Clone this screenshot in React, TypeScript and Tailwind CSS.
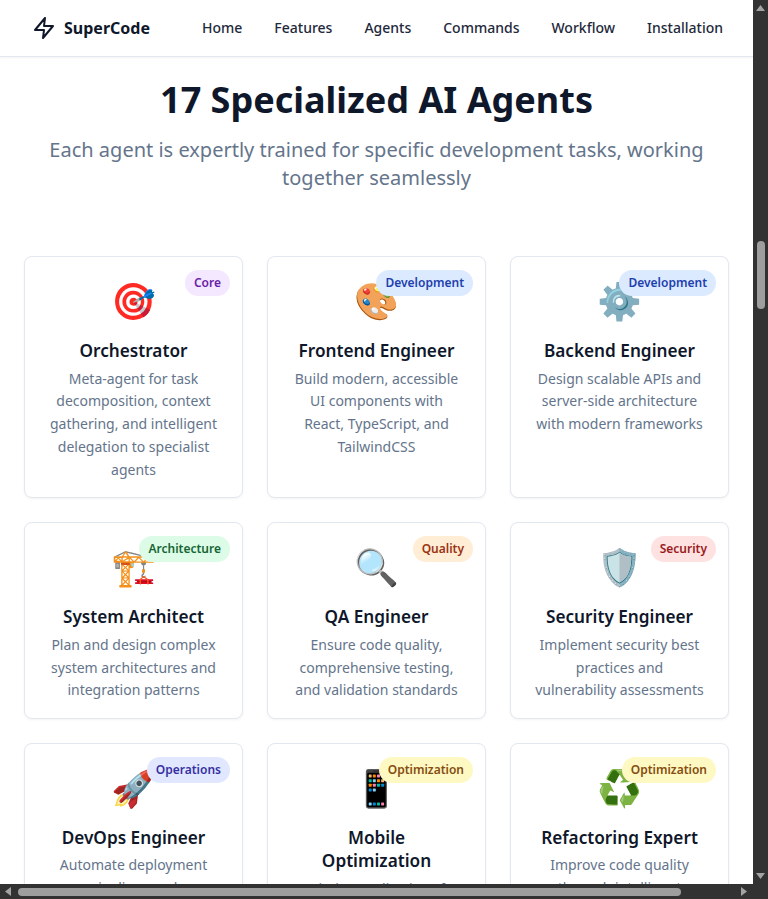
const font = { fontFamily: '"Noto Sans", "Noto Color Emoji", sans-serif' };

type Agent = {
  icon: string;
  name: string;
  tag: string;
  tagClass: string;
  text: string;
};

const agents: Agent[] = [
  {
    icon: "🎯",
    name: "Orchestrator",
    tag: "Core",
    tagClass: "bg-[#f3e8ff] text-[#6b21a8]",
    text: "Meta-agent for task decomposition, context gathering, and intelligent delegation to specialist agents",
  },
  {
    icon: "🎨",
    name: "Frontend Engineer",
    tag: "Development",
    tagClass: "bg-[#dbeafe] text-[#1e40af]",
    text: "Build modern, accessible UI components with React, TypeScript, and TailwindCSS",
  },
  {
    icon: "⚙️",
    name: "Backend Engineer",
    tag: "Development",
    tagClass: "bg-[#dbeafe] text-[#1e40af]",
    text: "Design scalable APIs and server-side architecture with modern frameworks",
  },
  {
    icon: "🏗️",
    name: "System Architect",
    tag: "Architecture",
    tagClass: "bg-[#dcfce7] text-[#166534]",
    text: "Plan and design complex system architectures and integration patterns",
  },
  {
    icon: "🔍",
    name: "QA Engineer",
    tag: "Quality",
    tagClass: "bg-[#ffedd5] text-[#9a3412]",
    text: "Ensure code quality, comprehensive testing, and validation standards",
  },
  {
    icon: "🛡️",
    name: "Security Engineer",
    tag: "Security",
    tagClass: "bg-[#fee2e2] text-[#991b1b]",
    text: "Implement security best practices and vulnerability assessments",
  },
  {
    icon: "🚀",
    name: "DevOps Engineer",
    tag: "Operations",
    tagClass: "bg-[#e0e7ff] text-[#3730a3]",
    text: "Automate deployment pipelines and infrastructure management",
  },
  {
    icon: "📱",
    name: "Mobile Optimization",
    tag: "Optimization",
    tagClass: "bg-[#fef9c3] text-[#854d0e]",
    text: "Optimize applications for mobile devices and performance",
  },
  {
    icon: "♻️",
    name: "Refactoring Expert",
    tag: "Optimization",
    tagClass: "bg-[#fef9c3] text-[#854d0e]",
    text: "Improve code quality through intelligent refactoring",
  },
];

const navLinks = ["Home", "Features", "Agents", "Commands", "Workflow", "Installation"];

function AgentCard({ agent }: { agent: Agent }) {
  return (
    <div className="relative rounded-lg border border-[#e2e8f0] bg-white px-6 pb-[15.6px] pt-6 text-center shadow-[0_1px_3px_rgba(0,0,0,0.05)]">
      <span
        className={`absolute right-3 top-[13px] rounded-full px-[9px] py-1 text-xs font-semibold leading-[18px] ${agent.tagClass}`}
      >
        {agent.tag}
      </span>
      <div className="mb-[18px] text-4xl leading-[40px]">{agent.icon}</div>
      <h3 className="mb-[5.5px] text-[17.2px] font-semibold leading-[1.35] text-[#0f172a]">{agent.name}</h3>
      <p className="text-sm leading-[22.75px] text-[#64748b]">{agent.text}</p>
    </div>
  );
}

function VerticalScrollbar() {
  return (
    <div className="flex w-[15px] shrink-0 flex-col items-center bg-[#323232] pt-[5px]">
      <svg width="9" height="6" viewBox="0 0 9 6" className="fill-[#a3a3a3]">
        <path d="M4.5 0 9 6H0z" />
      </svg>
      <div className="mt-[230px] h-[68px] w-2 rounded bg-[#9e9e9e]" />
      <svg width="9" height="6" viewBox="0 0 9 6" className="mt-auto mb-[5px] fill-[#a3a3a3]">
        <path d="M0 0h9L4.5 6z" />
      </svg>
    </div>
  );
}

function HorizontalScrollbar() {
  return (
    <div className="flex h-[15px] shrink-0 items-center bg-[#323232] pl-[5px] pr-[21px]">
      <svg width="6" height="9" viewBox="0 0 6 9" className="fill-[#a3a3a3]">
        <path d="M6 0v9L0 4.5z" />
      </svg>
      <div className="ml-[7px] h-2 w-[663px] rounded bg-[#9e9e9e]" />
      <svg width="6" height="9" viewBox="0 0 6 9" className="ml-auto fill-[#a3a3a3]">
        <path d="M0 0v9l6-4.5z" />
      </svg>
    </div>
  );
}

export default function App() {
  return (
    <div className="flex h-[899px] w-[768px] flex-col overflow-hidden bg-white" style={font}>
      <div className="flex min-h-0 flex-1">
        <div className="flex min-w-0 flex-1 flex-col overflow-hidden">
          <nav className="flex h-[57px] shrink-0 items-center border-b border-[#e2e8f0] bg-white pl-8 pr-[30px] shadow-[0_1px_2px_rgba(0,0,0,0.05)]">
            <div className="flex items-center gap-2">
              <svg
                width="24"
                height="24"
                viewBox="0 0 24 24"
                fill="none"
                stroke="#0f172a"
                strokeWidth="2"
                strokeLinejoin="round"
                strokeLinecap="round"
              >
                <path d="M13 2 3 14h9l-1 8 10-12h-9l1-8z" />
              </svg>
              <span className="text-base font-bold text-[#0f172a]">SuperCode</span>
            </div>
            <div className="ml-auto flex gap-8">
              {navLinks.map((link) => (
                <a key={link} className="text-sm font-medium text-[#1e293b]">
                  {link}
                </a>
              ))}
            </div>
          </nav>
          <section className="px-6 pt-4">
            <h2 className="text-center text-4xl font-bold leading-[54px] text-[#0f172a]">
              17 Specialized AI Agents
            </h2>
            <p className="mx-auto mt-[9px] max-w-[672px] text-center text-xl leading-7 text-[#64748b]">
              Each agent is expertly trained for specific development tasks, working together seamlessly
            </p>
            <div className="mt-16 grid grid-cols-3 gap-6">
              {agents.map((agent) => (
                <AgentCard key={agent.name} agent={agent} />
              ))}
            </div>
          </section>
        </div>
        <VerticalScrollbar />
      </div>
      <HorizontalScrollbar />
    </div>
  );
}
